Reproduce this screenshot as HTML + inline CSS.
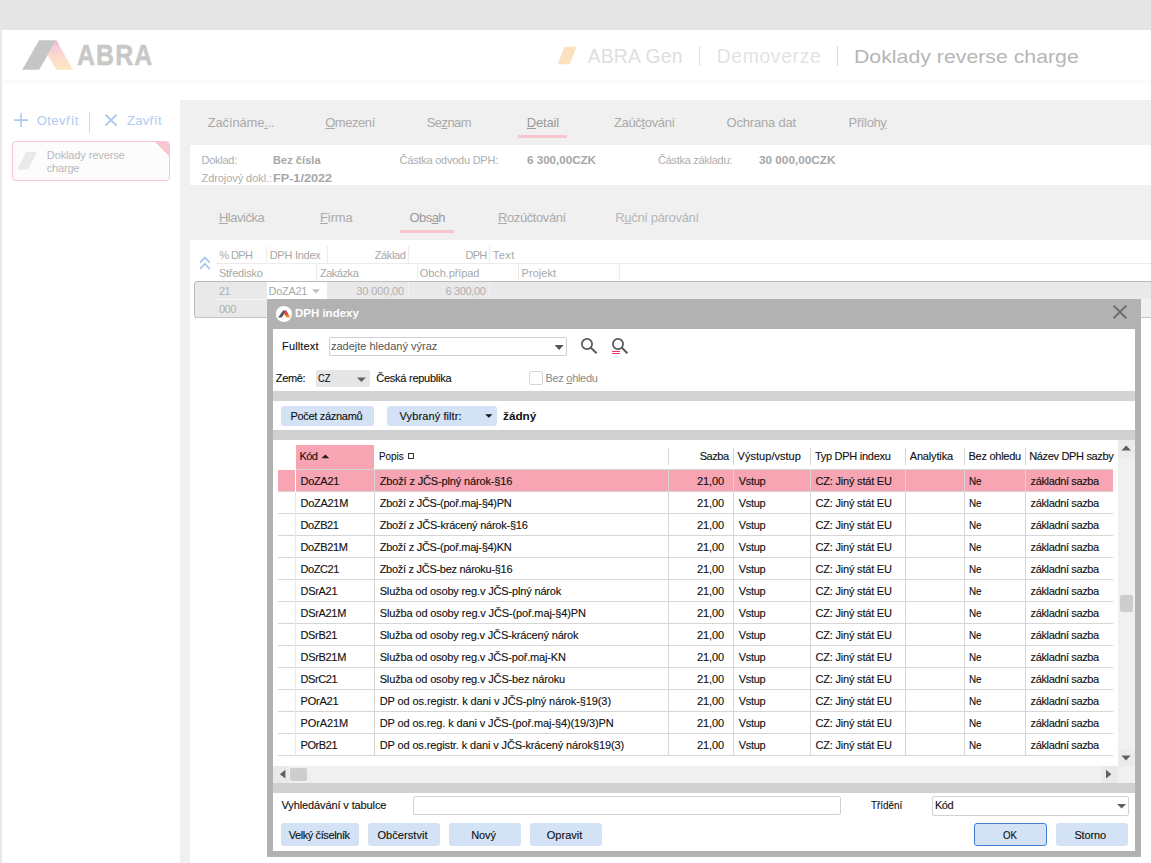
<!DOCTYPE html>
<html lang="cs"><head><meta charset="utf-8"><title>DPH indexy</title>
<style>
html,body{margin:0;padding:0;}
body{width:1151px;height:863px;overflow:hidden;background:#ffffff;position:relative;
 font-family:"Liberation Sans",sans-serif;}
#r{position:absolute;left:0;top:0;width:1151px;height:863px;overflow:hidden;}
#r div,#r svg,#r span{position:absolute;}
.t{white-space:pre;line-height:1;transform-origin:0 50%;}
.k{-webkit-text-stroke:0.12px #101010;}
u{text-decoration:underline;text-underline-offset:1px;}
</style></head>
<body><div id="r">
<div style="left:0px;top:0px;width:1151px;height:30px;background:#e5e5e5;"></div>
<div style="left:0px;top:30px;width:2px;height:833px;background:#e9e9e9;"></div>
<div style="left:2px;top:80px;width:1149px;height:5px;background:linear-gradient(#f8f8f8,#ffffff);"></div>
<div style="left:180px;top:100px;width:971px;height:763px;background:#f0f0f0;"></div>
<div style="left:190px;top:145px;width:961px;height:40px;background:#ffffff;"></div>
<div style="left:190px;top:240px;width:961px;height:623px;background:#ffffff;"></div>
<svg style="left:0;top:30px" width="180" height="50" viewBox="0 30 180 50">
<defs><linearGradient id="lg" x1="0" y1="0" x2="0" y2="1"><stop offset="0" stop-color="#f3a4d8"/><stop offset="0.22" stop-color="#f8cbd8"/><stop offset="0.6" stop-color="#fcdccb"/><stop offset="1" stop-color="#fee7c0"/></linearGradient></defs>
<polygon points="22.2,69.75 39.1,40.2 56.4,40.2 39.1,69.75" fill="#c6c6c6"/>
<polygon points="56.4,40.2 73,69.75 56.4,69.75 47.6,55.2" fill="url(#lg)"/>
</svg>
<span class="t" style="left:76.60px;top:41.09px;font-size:28.6px;color:#c8c8c8;font-weight:bold;letter-spacing:1.300px;transform:scaleX(0.8700);-webkit-text-stroke:0.5px #c8c8c8;">ABRA</span>
<svg style="left:555px;top:44px" width="24" height="22" viewBox="555 44 24 22"><polygon points="557.7,64.2 564.5,46.7 576.5,46.7 569.7,64.2" fill="#fde0bd"/></svg>
<span class="t" style="left:587.70px;top:46.76px;font-size:19.3px;color:#dedede;letter-spacing:0.221px;">ABRA Gen</span>
<div style="left:699px;top:46px;width:1px;height:20px;background:#e2e2e2;"></div>
<span class="t" style="left:716.70px;top:46.76px;font-size:19.3px;color:#e3e3e3;letter-spacing:0.680px;">Demoverze</span>
<div style="left:837px;top:46px;width:1px;height:20px;background:#dcdcdc;"></div>
<span class="t" style="left:854.00px;top:47.42px;font-size:19px;color:#b6b6b6;transform:scaleX(1.1203);">Doklady reverse charge</span>
<svg style="left:10px;top:108px" width="160" height="28" viewBox="10 108 160 28" fill="none" stroke="#a9c9ee"><path d="M14 120.1H28M21 113.2V127" stroke-width="1.6"/><path d="M105.4 114.6L116.6 125.6M116.6 114.6L105.4 125.6" stroke-width="1.9"/><path d="M89.5 112V133" stroke="#d0d8ee" stroke-width="1"/></svg>
<span class="t" style="left:36.70px;top:113.70px;font-size:13px;color:#aecbef;letter-spacing:0.442px;">Otevřít</span>
<span class="t" style="left:127.00px;top:113.70px;font-size:13px;color:#aecbef;letter-spacing:0.280px;">Zavřít</span>
<div style="left:12px;top:141px;width:156px;height:38px;border:1px solid #f8c4cd;border-radius:4px;background:#fcfcfc;overflow:hidden;"><div style="right:-1px;top:-1px;width:0;height:0;border-style:solid;border-width:0 16px 16px 0;border-color:transparent #f9c5ce transparent transparent;"></div></div>
<svg style="left:16px;top:151px" width="24" height="20" viewBox="16 151 24 20"><polygon points="17.2,169.6 26.1,152.1 37,152.1 28.1,169.6" fill="#e9e9e9"/></svg>
<span class="t" style="left:46.80px;top:150.19px;font-size:11px;color:#b9b9bd;letter-spacing:-0.112px;">Doklady reverse</span>
<span class="t" style="left:46.80px;top:163.19px;font-size:11px;color:#b9b9bd;letter-spacing:-0.189px;">charge</span>
<span class="t" style="left:207.80px;top:115.60px;font-size:13px;color:#aaaaaa;letter-spacing:-0.176px;">Začínáme<u>.</u>..</span>
<span class="t" style="left:325.20px;top:115.60px;font-size:13px;color:#aaaaaa;letter-spacing:-0.449px;"><u>O</u>mezení</span>
<span class="t" style="left:426.70px;top:115.60px;font-size:13px;color:#aaaaaa;letter-spacing:-0.565px;">Se<u>z</u>nam</span>
<span class="t" style="left:526.80px;top:115.60px;font-size:13px;color:#9a9a9a;letter-spacing:-0.173px;"><u>D</u>etail</span>
<span class="t" style="left:614.00px;top:115.60px;font-size:13px;color:#aaaaaa;letter-spacing:-0.351px;">Zaúč<u>t</u>ování</span>
<span class="t" style="left:726.60px;top:115.60px;font-size:13px;color:#aaaaaa;letter-spacing:-0.195px;">Ochrana dat</span>
<span class="t" style="left:848.60px;top:115.60px;font-size:13px;color:#aaaaaa;letter-spacing:-0.366px;">Příloh<u>y</u></span>
<div style="left:518px;top:135px;width:49px;height:3px;background:#f7c5ce;"></div>
<span class="t" style="left:201.50px;top:154.79px;font-size:11px;color:#adadad;letter-spacing:-0.257px;">Doklad:</span>
<span class="t" style="left:273.00px;top:154.79px;font-size:11px;color:#a6a6a6;font-weight:bold;letter-spacing:0.057px;">Bez čísla</span>
<span class="t" style="left:201.50px;top:172.79px;font-size:11px;color:#adadad;letter-spacing:-0.069px;">Zdrojový dokl.:</span>
<span class="t" style="left:273.00px;top:172.79px;font-size:11px;color:#a6a6a6;font-weight:bold;transform:scaleX(1.1486);">FP-1/2022</span>
<span class="t" style="left:399.60px;top:154.79px;font-size:11px;color:#adadad;letter-spacing:-0.240px;">Částka odvodu DPH:</span>
<span class="t" style="left:527.30px;top:154.79px;font-size:11px;color:#a6a6a6;font-weight:bold;transform:scaleX(1.0546);">6 300,00CZK</span>
<span class="t" style="left:658.00px;top:154.79px;font-size:11px;color:#adadad;letter-spacing:-0.284px;">Částka základu:</span>
<span class="t" style="left:759.00px;top:154.79px;font-size:11px;color:#a6a6a6;font-weight:bold;transform:scaleX(1.0679);">30 000,00CZK</span>
<span class="t" style="left:218.90px;top:211.30px;font-size:13px;color:#aaaaaa;letter-spacing:-0.453px;"><u>H</u>lavička</span>
<span class="t" style="left:320.00px;top:211.30px;font-size:13px;color:#aaaaaa;letter-spacing:-0.103px;"><u>F</u>irma</span>
<span class="t" style="left:409.40px;top:211.30px;font-size:13px;color:#9a9a9a;letter-spacing:-0.540px;">Obs<u>a</u>h</span>
<span class="t" style="left:498.00px;top:211.30px;font-size:13px;color:#aaaaaa;letter-spacing:-0.405px;"><u>R</u>ozúčtování</span>
<span class="t" style="left:615.30px;top:211.30px;font-size:13px;color:#b6b6b6;letter-spacing:-0.340px;">R<u>u</u>ční párování</span>
<div style="left:400px;top:230px;width:54px;height:3px;background:#f7c5ce;"></div>
<div style="left:216px;top:263px;width:935px;height:1px;background:#ececec;"></div>
<div style="left:266px;top:246px;width:1px;height:17px;background:#ececec;"></div>
<div style="left:327px;top:246px;width:1px;height:17px;background:#ececec;"></div>
<div style="left:408px;top:246px;width:1px;height:17px;background:#ececec;"></div>
<div style="left:489px;top:246px;width:1px;height:17px;background:#ececec;"></div>
<div style="left:316px;top:264px;width:1px;height:18px;background:#ececec;"></div>
<div style="left:417px;top:264px;width:1px;height:18px;background:#ececec;"></div>
<div style="left:518px;top:264px;width:1px;height:18px;background:#ececec;"></div>
<div style="left:619px;top:264px;width:1px;height:18px;background:#ececec;"></div>
<span class="t" style="left:219.30px;top:250.19px;font-size:11px;color:#a8a8a8;letter-spacing:-0.612px;">% DPH</span>
<span class="t" style="left:269.70px;top:250.19px;font-size:11px;color:#a8a8a8;letter-spacing:-0.266px;">DPH Index</span>
<span class="t" style="left:374.70px;top:250.19px;font-size:11px;color:#a8a8a8;letter-spacing:-0.370px;">Základ</span>
<span class="t" style="left:465.50px;top:250.19px;font-size:11px;color:#a8a8a8;letter-spacing:-0.741px;">DPH</span>
<span class="t" style="left:492.80px;top:250.19px;font-size:11px;color:#a8a8a8;letter-spacing:0.456px;">Text</span>
<span class="t" style="left:218.90px;top:268.49px;font-size:11px;color:#a8a8a8;letter-spacing:-0.250px;">Středisko</span>
<span class="t" style="left:319.90px;top:268.49px;font-size:11px;color:#a8a8a8;letter-spacing:-0.453px;">Zakázka</span>
<span class="t" style="left:419.80px;top:268.49px;font-size:11px;color:#a8a8a8;letter-spacing:-0.095px;">Obch.případ</span>
<span class="t" style="left:521.60px;top:268.49px;font-size:11px;color:#a8a8a8;letter-spacing:0.023px;">Projekt</span>
<svg style="left:197px;top:254px" width="16" height="18" viewBox="197 254 16 18" fill="none" stroke="#a9c9ee" stroke-width="1.9"><path d="M200 262.7L204.9 257.7L209.8 262.7M200 268.9L204.9 263.9L209.8 268.9"/></svg>
<div style="left:194px;top:281px;width:960px;height:35px;border:1px solid #bbbbbb;border-radius:3px 0 0 3px;background:#e9e9e9;"></div>
<div style="left:1141px;top:299px;width:10px;height:18px;background:#f1f1f1;"></div>
<div style="left:216px;top:299px;width:60px;height:1px;background:#f4f4f4;"></div>
<div style="left:266.5px;top:282px;width:60.5px;height:17px;background:#ffffff;"></div>
<div style="left:408px;top:282px;width:1px;height:17px;background:#f2f2f2;"></div>
<div style="left:489px;top:282px;width:1px;height:17px;background:#f2f2f2;"></div>
<div style="left:195px;top:317px;width:1151px;height:1px;background:#c4c4c4;"></div>
<span class="t" style="left:218.90px;top:285.59px;font-size:11px;color:#b0b0b0;letter-spacing:-0.468px;">21</span>
<span class="t" style="left:268.60px;top:285.59px;font-size:11px;color:#a8a8a8;letter-spacing:-0.326px;">DoZA21</span>
<svg style="left:311px;top:288px" width="10" height="6" viewBox="311 288 10 6"><polygon points="312,289.2 320,289.2 316,293.4" fill="#c0c0c0"/></svg>
<span class="t" style="left:356.20px;top:285.59px;font-size:11px;color:#b0b0b0;letter-spacing:-0.115px;">30 000,00</span>
<span class="t" style="left:445.50px;top:285.59px;font-size:11px;color:#b0b0b0;letter-spacing:-0.353px;">6 300,00</span>
<span class="t" style="left:218.90px;top:303.89px;font-size:11px;color:#b0b0b0;letter-spacing:-0.485px;">000</span>
<div style="left:267px;top:299px;width:874px;height:558px;background:#b2b2b2;"></div>
<div style="left:273px;top:329px;width:862px;height:62px;background:#ffffff;"></div>
<div style="left:273px;top:391px;width:862px;height:10px;background:#d3d3d3;"></div>
<div style="left:273px;top:401px;width:862px;height:29px;background:#ffffff;"></div>
<div style="left:273px;top:430px;width:862px;height:10px;background:#d0d0d0;"></div>
<div style="left:273px;top:440px;width:862px;height:343px;background:#ffffff;"></div>
<div style="left:273px;top:783px;width:862px;height:9.5px;background:#d0d0d0;"></div>
<div style="left:273px;top:792.5px;width:862px;height:58.5px;background:#ffffff;"></div>
<svg style="left:275px;top:305px" width="19" height="19" viewBox="275 305 19 19">
<defs><linearGradient id="lg2" x1="0" y1="0" x2="0" y2="1"><stop offset="0" stop-color="#e6207a"/><stop offset="0.45" stop-color="#ee3a3a"/><stop offset="1" stop-color="#f7a520"/></linearGradient></defs>
<circle cx="283.9" cy="314" r="8.1" fill="#ffffff"/>
<polygon points="278.1,317.6 283.1,310.4 286.4,310.4 281.7,317.6" fill="#555555"/>
<polygon points="286.4,310.4 290.2,317.6 286.4,317.6 284.2,313.9" fill="url(#lg2)"/>
</svg>
<span class="t" style="left:295.20px;top:308.09px;font-size:11px;color:#ffffff;font-weight:bold;transform:scaleX(1.0437);">DPH indexy</span>
<svg style="left:1111px;top:303px" width="18" height="18" viewBox="1111 303 18 18" fill="none" stroke="#6e6e6e" stroke-width="2"><path d="M1113.6 305.6L1126.3 318.3M1126.3 305.6L1113.6 318.3"/></svg>
<span class="t k" style="left:282.00px;top:341.19px;font-size:11px;color:#101010;letter-spacing:0.156px;">Fulltext</span>
<div style="left:329px;top:337px;width:238px;height:19px;border:1px solid #cfcfcf;border-radius:2px;background:#fff;box-sizing:border-box;"></div>
<span class="t" style="left:330.90px;top:341.19px;font-size:11px;color:#555555;">zadejte hledaný výraz</span>
<svg style="left:553px;top:343px" width="12" height="8" viewBox="553 343 12 8"><polygon points="554.6,345 563.6,345 559.1,350" fill="#555"/></svg>
<svg style="left:578px;top:335px" width="54" height="22" viewBox="578 335 54 22" fill="none" stroke="#555" stroke-width="1.7"><circle cx="587" cy="344" r="5.1"/><path d="M590.8 347.6L596.6 353.3" stroke-width="2"/><circle cx="618" cy="344" r="5.1"/><path d="M621.8 347.6L627.4 353.3" stroke-width="2"/><path d="M612 351.5H620M612 353.5H620" stroke="#f0385c" stroke-width="1" shape-rendering="crispEdges"/></svg>
<span class="t k" style="left:275.80px;top:373.19px;font-size:11px;color:#101010;letter-spacing:-0.355px;">Země:</span>
<div style="left:316px;top:369.6px;width:53.5px;height:17.4px;background:#e6e6e6;border-radius:2px;"></div>
<span class="t k" style="left:317.80px;top:373.19px;font-size:11px;color:#101010;transform:scaleX(0.8456);">CZ</span>
<svg style="left:355px;top:376px" width="12" height="8" viewBox="355 376 12 8"><polygon points="357,377.6 365.8,377.6 361.4,382" fill="#606060"/></svg>
<span class="t k" style="left:376.30px;top:373.19px;font-size:11px;color:#101010;letter-spacing:-0.258px;">Česká republika</span>
<div style="left:529px;top:371px;width:14px;height:14px;border:1px solid #d6d6d6;border-radius:2px;background:#fff;box-sizing:border-box;"></div>
<span class="t" style="left:545.50px;top:373.19px;font-size:11px;color:#8a8a8a;letter-spacing:-0.304px;">Bez <u>o</u>hledu</span>
<div style="left:281px;top:406px;width:92.5px;height:20px;background:#d3e2f4;border-radius:3px;"></div>
<span class="t k" style="left:290.50px;top:410.59px;font-size:11px;color:#101010;letter-spacing:-0.309px;">Počet záznamů</span>
<div style="left:387px;top:406px;width:109.5px;height:20px;background:#d3e2f4;border-radius:3px;"></div>
<span class="t k" style="left:399.60px;top:410.59px;font-size:11px;color:#101010;letter-spacing:0.098px;">Vybraný filtr:</span>
<svg style="left:484px;top:413px" width="10" height="6" viewBox="484 413 10 6"><polygon points="485.2,414.2 492.4,414.2 488.8,417.8" fill="#111"/></svg>
<span class="t" style="left:503.10px;top:410.59px;font-size:11px;color:#111111;font-weight:bold;transform:scaleX(1.0682);">žádný</span>
<div style="left:296px;top:445px;width:78px;height:24px;background:#f7a4b3;"></div>
<span class="t k" style="left:299.60px;top:450.69px;font-size:11px;color:#101010;letter-spacing:-0.591px;">Kód</span>
<svg style="left:320px;top:453px" width="10" height="7" viewBox="320 453 10 7"><polygon points="321.5,458.2 329.3,458.2 325.4,454.4" fill="#222"/></svg>
<span class="t k" style="left:378.60px;top:450.69px;font-size:11px;color:#101010;transform:scaleX(0.8940);">Popis</span>
<div style="left:408.4px;top:452.6px;width:6px;height:6px;border:1px solid #333;box-sizing:border-box;"></div>
<span class="t k" style="left:699.70px;top:450.69px;font-size:11px;color:#101010;letter-spacing:-0.458px;">Sazba</span>
<span class="t k" style="left:737.60px;top:450.69px;font-size:11px;color:#101010;letter-spacing:0.027px;">Výstup/vstup</span>
<span class="t k" style="left:814.90px;top:450.69px;font-size:11px;color:#101010;letter-spacing:-0.270px;">Typ DPH indexu</span>
<span class="t k" style="left:909.70px;top:450.69px;font-size:11px;color:#101010;letter-spacing:-0.148px;">Analytika</span>
<span class="t k" style="left:968.50px;top:450.69px;font-size:11px;color:#101010;letter-spacing:-0.264px;">Bez ohledu</span>
<span class="t k" style="left:1029.20px;top:450.69px;font-size:11px;color:#101010;letter-spacing:-0.330px;">Název DPH sazby</span>
<div style="left:668.0px;top:448px;width:1px;height:17px;background:#d6d6d6;"></div>
<div style="left:733.0px;top:448px;width:1px;height:17px;background:#d6d6d6;"></div>
<div style="left:810.0px;top:448px;width:1px;height:17px;background:#d6d6d6;"></div>
<div style="left:905.0px;top:448px;width:1px;height:17px;background:#d6d6d6;"></div>
<div style="left:964.0px;top:448px;width:1px;height:17px;background:#d6d6d6;"></div>
<div style="left:1025.0px;top:448px;width:1px;height:17px;background:#d6d6d6;"></div>
<div style="left:278px;top:469.5px;width:17px;height:21.5px;background:#f7a4b3;"></div>
<div style="left:296px;top:470px;width:817px;height:21px;background:#f7a4b3;"></div>
<div style="left:278px;top:491px;width:835px;height:1px;background:#d6d6d6;"></div>
<span class="t k" style="left:300.50px;top:475.59px;font-size:11px;color:#101010;letter-spacing:-0.309px;">DoZA21</span>
<span class="t k" style="left:379.70px;top:475.59px;font-size:11px;color:#101010;letter-spacing:-0.144px;">Zboží z JČS-plný nárok-§16</span>
<span class="t k" style="left:697.00px;top:475.59px;font-size:11px;color:#101010;letter-spacing:-0.106px;">21,00</span>
<span class="t k" style="left:738.80px;top:475.59px;font-size:11px;color:#101010;letter-spacing:-0.346px;">Vstup</span>
<span class="t k" style="left:815.60px;top:475.59px;font-size:11px;color:#101010;letter-spacing:-0.210px;">CZ: Jiný stát EU</span>
<span class="t k" style="left:969.40px;top:475.59px;font-size:11px;color:#101010;transform:scaleX(0.8960);">Ne</span>
<span class="t k" style="left:1030.60px;top:475.59px;font-size:11px;color:#101010;letter-spacing:-0.370px;">základní sazba</span>
<div style="left:278px;top:513px;width:835px;height:1px;background:#d6d6d6;"></div>
<span class="t k" style="left:300.50px;top:497.59px;font-size:11px;color:#101010;letter-spacing:-0.288px;">DoZA21M</span>
<span class="t k" style="left:379.70px;top:497.59px;font-size:11px;color:#101010;letter-spacing:-0.267px;">Zboží z JČS-(poř.maj-§4)PN</span>
<span class="t k" style="left:697.00px;top:497.59px;font-size:11px;color:#101010;letter-spacing:-0.106px;">21,00</span>
<span class="t k" style="left:738.80px;top:497.59px;font-size:11px;color:#101010;letter-spacing:-0.346px;">Vstup</span>
<span class="t k" style="left:815.60px;top:497.59px;font-size:11px;color:#101010;letter-spacing:-0.210px;">CZ: Jiný stát EU</span>
<span class="t k" style="left:969.40px;top:497.59px;font-size:11px;color:#101010;transform:scaleX(0.8960);">Ne</span>
<span class="t k" style="left:1030.60px;top:497.59px;font-size:11px;color:#101010;letter-spacing:-0.370px;">základní sazba</span>
<div style="left:278px;top:535px;width:835px;height:1px;background:#d6d6d6;"></div>
<span class="t k" style="left:300.50px;top:519.59px;font-size:11px;color:#101010;letter-spacing:-0.376px;">DoZB21</span>
<span class="t k" style="left:379.70px;top:519.59px;font-size:11px;color:#101010;letter-spacing:-0.234px;">Zboží z JČS-krácený nárok-§16</span>
<span class="t k" style="left:697.00px;top:519.59px;font-size:11px;color:#101010;letter-spacing:-0.106px;">21,00</span>
<span class="t k" style="left:738.80px;top:519.59px;font-size:11px;color:#101010;letter-spacing:-0.346px;">Vstup</span>
<span class="t k" style="left:815.60px;top:519.59px;font-size:11px;color:#101010;letter-spacing:-0.210px;">CZ: Jiný stát EU</span>
<span class="t k" style="left:969.40px;top:519.59px;font-size:11px;color:#101010;transform:scaleX(0.8960);">Ne</span>
<span class="t k" style="left:1030.60px;top:519.59px;font-size:11px;color:#101010;letter-spacing:-0.370px;">základní sazba</span>
<div style="left:278px;top:557px;width:835px;height:1px;background:#d6d6d6;"></div>
<span class="t k" style="left:300.50px;top:541.59px;font-size:11px;color:#101010;letter-spacing:-0.360px;">DoZB21M</span>
<span class="t k" style="left:379.70px;top:541.59px;font-size:11px;color:#101010;letter-spacing:-0.267px;">Zboží z JČS-(poř.maj-§4)KN</span>
<span class="t k" style="left:697.00px;top:541.59px;font-size:11px;color:#101010;letter-spacing:-0.106px;">21,00</span>
<span class="t k" style="left:738.80px;top:541.59px;font-size:11px;color:#101010;letter-spacing:-0.346px;">Vstup</span>
<span class="t k" style="left:815.60px;top:541.59px;font-size:11px;color:#101010;letter-spacing:-0.210px;">CZ: Jiný stát EU</span>
<span class="t k" style="left:969.40px;top:541.59px;font-size:11px;color:#101010;transform:scaleX(0.8960);">Ne</span>
<span class="t k" style="left:1030.60px;top:541.59px;font-size:11px;color:#101010;letter-spacing:-0.370px;">základní sazba</span>
<div style="left:278px;top:579px;width:835px;height:1px;background:#d6d6d6;"></div>
<span class="t k" style="left:300.50px;top:563.59px;font-size:11px;color:#101010;letter-spacing:-0.410px;">DoZC21</span>
<span class="t k" style="left:379.70px;top:563.59px;font-size:11px;color:#101010;letter-spacing:-0.285px;">Zboží z JČS-bez nároku-§16</span>
<span class="t k" style="left:697.00px;top:563.59px;font-size:11px;color:#101010;letter-spacing:-0.106px;">21,00</span>
<span class="t k" style="left:738.80px;top:563.59px;font-size:11px;color:#101010;letter-spacing:-0.346px;">Vstup</span>
<span class="t k" style="left:815.60px;top:563.59px;font-size:11px;color:#101010;letter-spacing:-0.210px;">CZ: Jiný stát EU</span>
<span class="t k" style="left:969.40px;top:563.59px;font-size:11px;color:#101010;transform:scaleX(0.8960);">Ne</span>
<span class="t k" style="left:1030.60px;top:563.59px;font-size:11px;color:#101010;letter-spacing:-0.370px;">základní sazba</span>
<div style="left:278px;top:601px;width:835px;height:1px;background:#d6d6d6;"></div>
<span class="t k" style="left:300.50px;top:585.59px;font-size:11px;color:#101010;letter-spacing:-0.303px;">DSrA21</span>
<span class="t k" style="left:379.70px;top:585.59px;font-size:11px;color:#101010;letter-spacing:-0.156px;">Služba od osoby reg.v JČS-plný nárok</span>
<span class="t k" style="left:697.00px;top:585.59px;font-size:11px;color:#101010;letter-spacing:-0.106px;">21,00</span>
<span class="t k" style="left:738.80px;top:585.59px;font-size:11px;color:#101010;letter-spacing:-0.346px;">Vstup</span>
<span class="t k" style="left:815.60px;top:585.59px;font-size:11px;color:#101010;letter-spacing:-0.210px;">CZ: Jiný stát EU</span>
<span class="t k" style="left:969.40px;top:585.59px;font-size:11px;color:#101010;transform:scaleX(0.8960);">Ne</span>
<span class="t k" style="left:1030.60px;top:585.59px;font-size:11px;color:#101010;letter-spacing:-0.370px;">základní sazba</span>
<div style="left:278px;top:623px;width:835px;height:1px;background:#d6d6d6;"></div>
<span class="t k" style="left:300.50px;top:607.59px;font-size:11px;color:#101010;letter-spacing:-0.311px;">DSrA21M</span>
<span class="t k" style="left:379.70px;top:607.59px;font-size:11px;color:#101010;letter-spacing:-0.138px;">Služba od osoby reg.v JČS-(poř.maj-§4)PN</span>
<span class="t k" style="left:697.00px;top:607.59px;font-size:11px;color:#101010;letter-spacing:-0.106px;">21,00</span>
<span class="t k" style="left:738.80px;top:607.59px;font-size:11px;color:#101010;letter-spacing:-0.346px;">Vstup</span>
<span class="t k" style="left:815.60px;top:607.59px;font-size:11px;color:#101010;letter-spacing:-0.210px;">CZ: Jiný stát EU</span>
<span class="t k" style="left:969.40px;top:607.59px;font-size:11px;color:#101010;transform:scaleX(0.8960);">Ne</span>
<span class="t k" style="left:1030.60px;top:607.59px;font-size:11px;color:#101010;letter-spacing:-0.370px;">základní sazba</span>
<div style="left:278px;top:645px;width:835px;height:1px;background:#d6d6d6;"></div>
<span class="t k" style="left:300.50px;top:629.59px;font-size:11px;color:#101010;letter-spacing:-0.336px;">DSrB21</span>
<span class="t k" style="left:379.70px;top:629.59px;font-size:11px;color:#101010;letter-spacing:-0.173px;">Služba od osoby reg.v JČS-krácený nárok</span>
<span class="t k" style="left:697.00px;top:629.59px;font-size:11px;color:#101010;letter-spacing:-0.106px;">21,00</span>
<span class="t k" style="left:738.80px;top:629.59px;font-size:11px;color:#101010;letter-spacing:-0.346px;">Vstup</span>
<span class="t k" style="left:815.60px;top:629.59px;font-size:11px;color:#101010;letter-spacing:-0.210px;">CZ: Jiný stát EU</span>
<span class="t k" style="left:969.40px;top:629.59px;font-size:11px;color:#101010;transform:scaleX(0.8960);">Ne</span>
<span class="t k" style="left:1030.60px;top:629.59px;font-size:11px;color:#101010;letter-spacing:-0.370px;">základní sazba</span>
<div style="left:278px;top:667px;width:835px;height:1px;background:#d6d6d6;"></div>
<span class="t k" style="left:300.50px;top:651.59px;font-size:11px;color:#101010;letter-spacing:-0.311px;">DSrB21M</span>
<span class="t k" style="left:379.70px;top:651.59px;font-size:11px;color:#101010;letter-spacing:-0.163px;">Služba od osoby reg.v JČS-poř.maj-KN</span>
<span class="t k" style="left:697.00px;top:651.59px;font-size:11px;color:#101010;letter-spacing:-0.106px;">21,00</span>
<span class="t k" style="left:738.80px;top:651.59px;font-size:11px;color:#101010;letter-spacing:-0.346px;">Vstup</span>
<span class="t k" style="left:815.60px;top:651.59px;font-size:11px;color:#101010;letter-spacing:-0.210px;">CZ: Jiný stát EU</span>
<span class="t k" style="left:969.40px;top:651.59px;font-size:11px;color:#101010;transform:scaleX(0.8960);">Ne</span>
<span class="t k" style="left:1030.60px;top:651.59px;font-size:11px;color:#101010;letter-spacing:-0.370px;">základní sazba</span>
<div style="left:278px;top:689px;width:835px;height:1px;background:#d6d6d6;"></div>
<span class="t k" style="left:300.50px;top:673.59px;font-size:11px;color:#101010;letter-spacing:-0.404px;">DSrC21</span>
<span class="t k" style="left:379.70px;top:673.59px;font-size:11px;color:#101010;letter-spacing:-0.152px;">Služba od osoby reg.v JČS-bez nároku</span>
<span class="t k" style="left:697.00px;top:673.59px;font-size:11px;color:#101010;letter-spacing:-0.106px;">21,00</span>
<span class="t k" style="left:738.80px;top:673.59px;font-size:11px;color:#101010;letter-spacing:-0.346px;">Vstup</span>
<span class="t k" style="left:815.60px;top:673.59px;font-size:11px;color:#101010;letter-spacing:-0.210px;">CZ: Jiný stát EU</span>
<span class="t k" style="left:969.40px;top:673.59px;font-size:11px;color:#101010;transform:scaleX(0.8960);">Ne</span>
<span class="t k" style="left:1030.60px;top:673.59px;font-size:11px;color:#101010;letter-spacing:-0.370px;">základní sazba</span>
<div style="left:278px;top:711px;width:835px;height:1px;background:#d6d6d6;"></div>
<span class="t k" style="left:300.50px;top:695.59px;font-size:11px;color:#101010;letter-spacing:-0.205px;">POrA21</span>
<span class="t k" style="left:379.70px;top:695.59px;font-size:11px;color:#101010;letter-spacing:-0.094px;">DP od os.registr. k dani v JČS-plný nárok-§19(3)</span>
<span class="t k" style="left:697.00px;top:695.59px;font-size:11px;color:#101010;letter-spacing:-0.106px;">21,00</span>
<span class="t k" style="left:738.80px;top:695.59px;font-size:11px;color:#101010;letter-spacing:-0.346px;">Vstup</span>
<span class="t k" style="left:815.60px;top:695.59px;font-size:11px;color:#101010;letter-spacing:-0.210px;">CZ: Jiný stát EU</span>
<span class="t k" style="left:969.40px;top:695.59px;font-size:11px;color:#101010;transform:scaleX(0.8960);">Ne</span>
<span class="t k" style="left:1030.60px;top:695.59px;font-size:11px;color:#101010;letter-spacing:-0.370px;">základní sazba</span>
<div style="left:278px;top:733px;width:835px;height:1px;background:#d6d6d6;"></div>
<span class="t k" style="left:300.50px;top:717.59px;font-size:11px;color:#101010;letter-spacing:-0.113px;">POrA21M</span>
<span class="t k" style="left:379.70px;top:717.59px;font-size:11px;color:#101010;letter-spacing:-0.118px;">DP od os.reg. k dani v JČS-(poř.maj-§4)(19/3)PN</span>
<span class="t k" style="left:697.00px;top:717.59px;font-size:11px;color:#101010;letter-spacing:-0.106px;">21,00</span>
<span class="t k" style="left:738.80px;top:717.59px;font-size:11px;color:#101010;letter-spacing:-0.346px;">Vstup</span>
<span class="t k" style="left:815.60px;top:717.59px;font-size:11px;color:#101010;letter-spacing:-0.210px;">CZ: Jiný stát EU</span>
<span class="t k" style="left:969.40px;top:717.59px;font-size:11px;color:#101010;transform:scaleX(0.8960);">Ne</span>
<span class="t k" style="left:1030.60px;top:717.59px;font-size:11px;color:#101010;letter-spacing:-0.370px;">základní sazba</span>
<div style="left:278px;top:755px;width:835px;height:1px;background:#d6d6d6;"></div>
<span class="t k" style="left:300.50px;top:739.59px;font-size:11px;color:#101010;letter-spacing:-0.405px;">POrB21</span>
<span class="t k" style="left:379.70px;top:739.59px;font-size:11px;color:#101010;letter-spacing:-0.123px;">DP od os.registr. k dani v JČS-krácený nárok§19(3)</span>
<span class="t k" style="left:697.00px;top:739.59px;font-size:11px;color:#101010;letter-spacing:-0.106px;">21,00</span>
<span class="t k" style="left:738.80px;top:739.59px;font-size:11px;color:#101010;letter-spacing:-0.346px;">Vstup</span>
<span class="t k" style="left:815.60px;top:739.59px;font-size:11px;color:#101010;letter-spacing:-0.210px;">CZ: Jiný stát EU</span>
<span class="t k" style="left:969.40px;top:739.59px;font-size:11px;color:#101010;transform:scaleX(0.8960);">Ne</span>
<span class="t k" style="left:1030.60px;top:739.59px;font-size:11px;color:#101010;letter-spacing:-0.370px;">základní sazba</span>
<div style="left:295px;top:469px;width:1px;height:287px;background:#e8e8e8;"></div>
<div style="left:374px;top:469px;width:1px;height:287px;background:#d6d6d6;"></div>
<div style="left:668.0px;top:469px;width:1px;height:287px;background:#d6d6d6;"></div>
<div style="left:733.0px;top:469px;width:1px;height:287px;background:#d6d6d6;"></div>
<div style="left:810.0px;top:469px;width:1px;height:287px;background:#d6d6d6;"></div>
<div style="left:905.0px;top:469px;width:1px;height:287px;background:#d6d6d6;"></div>
<div style="left:964.0px;top:469px;width:1px;height:287px;background:#d6d6d6;"></div>
<div style="left:1025.0px;top:469px;width:1px;height:287px;background:#d6d6d6;"></div>
<div style="left:295px;top:469px;width:1px;height:23px;background:#ffffff;"></div>
<div style="left:296px;top:469px;width:817px;height:1px;background:#d6d6d6;"></div>
<div style="left:1118px;top:440px;width:17px;height:343px;background:#f0f0f0;"></div>
<div style="left:273px;top:766px;width:862px;height:17px;background:#f0f0f0;"></div>
<div style="left:1120px;top:595px;width:13px;height:17px;background:#cdcdcd;border-radius:2px;"></div>
<div style="left:290px;top:768px;width:17px;height:13px;background:#cdcdcd;border-radius:2px;"></div>
<div style="left:1101.5px;top:766px;width:16.5px;height:17px;background:#e9e9e9;"></div>
<div style="left:273px;top:766px;width:16px;height:17px;background:#e9e9e9;"></div>
<div style="left:1118px;top:440px;width:17px;height:17px;background:#ebebeb;"></div>
<div style="left:1118px;top:749px;width:17px;height:17px;background:#ebebeb;"></div>
<svg style="left:1118px;top:440px" width="17" height="343" viewBox="1118 440 17 343" fill="#606060"><polygon points="1121.4,450.4 1131,450.4 1126.2,445.6"/><polygon points="1121.4,755.6 1130.6,755.6 1126,760.4"/></svg>
<svg style="left:273px;top:766px" width="862" height="17" viewBox="273 766 862 17" fill="#606060"><polygon points="285.4,769.8 285.4,778.6 279.8,774.2"/><polygon points="1106,769.8 1106,778.6 1111.4,774.2"/></svg>
<span class="t k" style="left:281.50px;top:800.09px;font-size:11px;color:#101010;letter-spacing:-0.115px;">Vyhledávání v tabulce</span>
<div style="left:413px;top:796px;width:428px;height:18.5px;border:1px solid #d2d2d2;border-radius:2px;background:#fff;box-sizing:border-box;"></div>
<span class="t k" style="left:871.00px;top:800.09px;font-size:11px;color:#101010;transform:scaleX(0.8982);">Třídění</span>
<div style="left:932px;top:796px;width:197px;height:19.5px;border:1px solid #d2d2d2;border-radius:2px;background:#fff;box-sizing:border-box;"></div>
<span class="t k" style="left:935.00px;top:800.09px;font-size:11px;color:#101010;letter-spacing:-0.524px;">Kód</span>
<svg style="left:1115px;top:802px" width="13" height="8" viewBox="1115 802 13 8"><polygon points="1117,804 1126.2,804 1121.6,808.6" fill="#606060"/></svg>
<div style="left:281px;top:823px;width:77.69999999999999px;height:23px;background:#d3e2f4;border-radius:3px;"></div>
<span class="t k" style="left:288.70px;top:830.39px;font-size:11px;color:#101010;letter-spacing:-0.403px;">Velký číselník</span>
<div style="left:368.2px;top:823px;width:71.80000000000001px;height:23px;background:#d3e2f4;border-radius:3px;"></div>
<span class="t k" style="left:377.50px;top:830.39px;font-size:11px;color:#101010;letter-spacing:0.059px;">Občerstvit</span>
<div style="left:449px;top:823px;width:72px;height:23px;background:#d3e2f4;border-radius:3px;"></div>
<span class="t k" style="left:471.20px;top:830.39px;font-size:11px;color:#101010;letter-spacing:-0.065px;">Nový</span>
<div style="left:530px;top:823px;width:71.60000000000002px;height:23px;background:#d3e2f4;border-radius:3px;"></div>
<span class="t k" style="left:546.80px;top:830.39px;font-size:11px;color:#101010;letter-spacing:0.021px;">Opravit</span>
<div style="left:974px;top:823px;width:73px;height:23px;background:#d3e2f4;border-radius:3px;border:1px solid #3f7fd2;box-sizing:border-box;"></div>
<span class="t k" style="left:1002.80px;top:830.39px;font-size:11px;color:#101010;transform:scaleX(0.8809);">OK</span>
<div style="left:1056px;top:823px;width:71.70000000000005px;height:23px;background:#d3e2f4;border-radius:3px;"></div>
<span class="t k" style="left:1074.40px;top:830.39px;font-size:11px;color:#101010;letter-spacing:-0.135px;">Storno</span>
</div></body></html>
